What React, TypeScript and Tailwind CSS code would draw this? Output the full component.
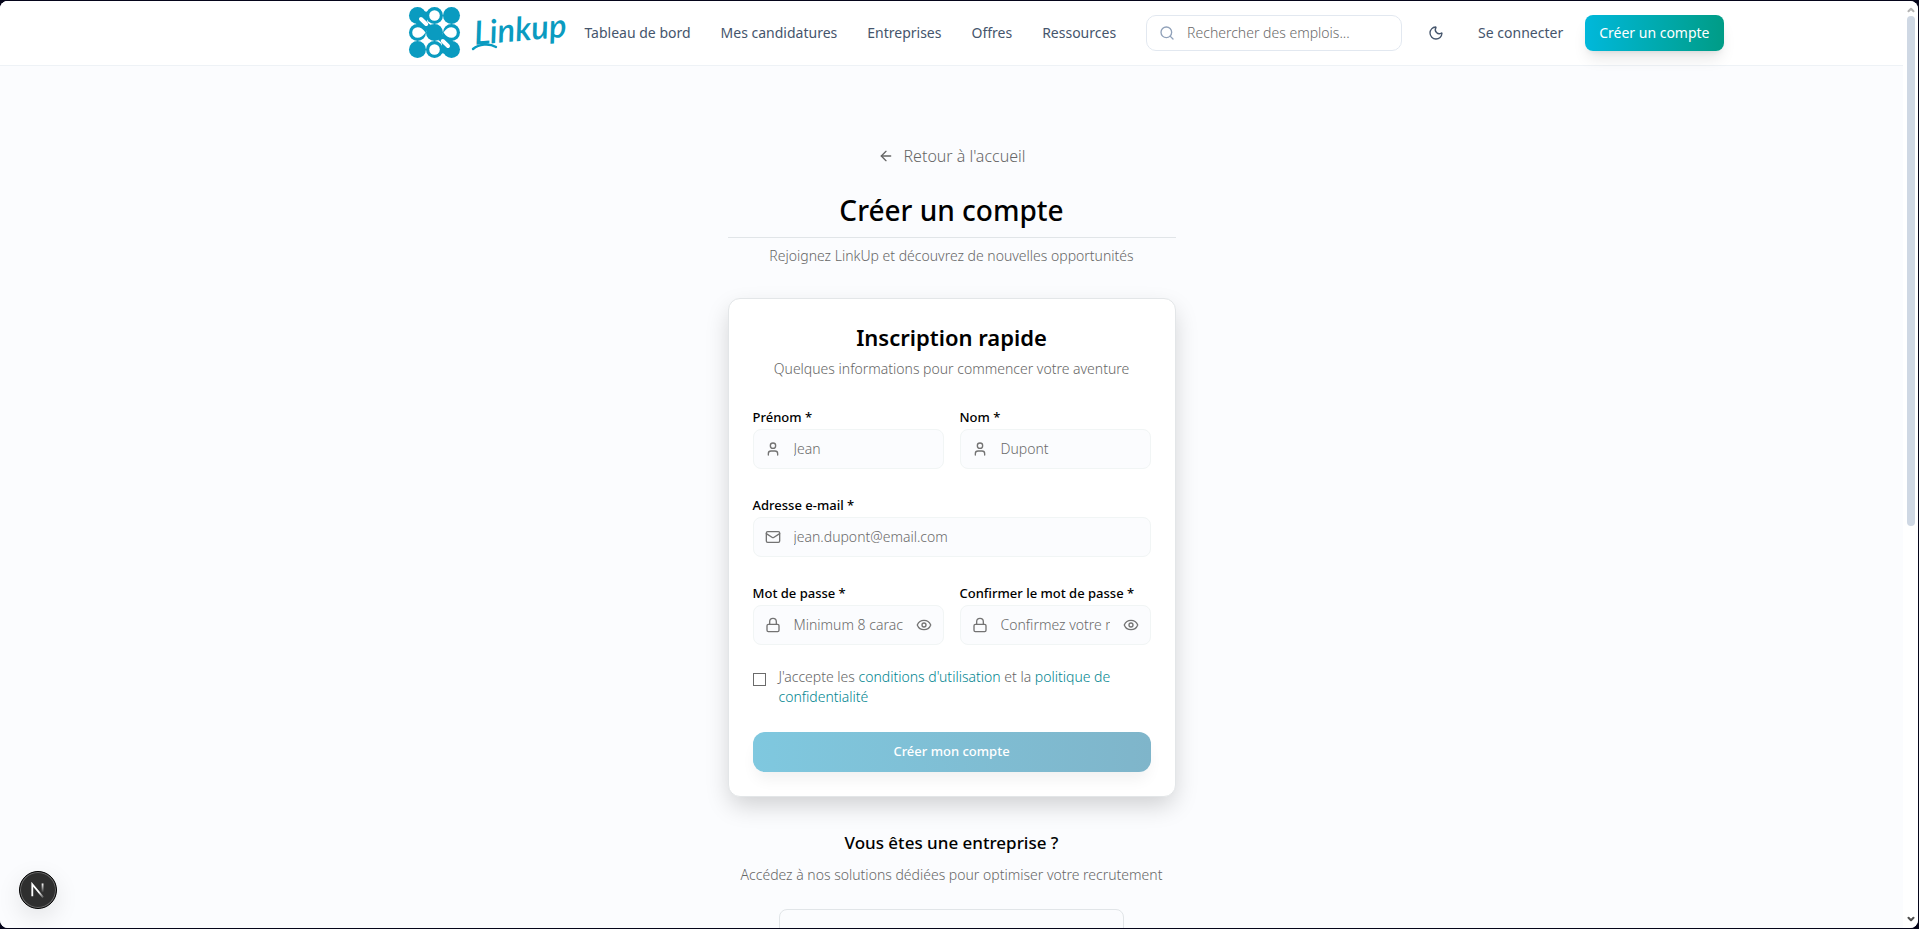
import React from "react";
import {
  ArrowLeft,
  ChevronDown,
  ChevronUp,
  Eye,
  Lock,
  Mail,
  Moon,
  Search,
  User,
  type LucideIcon,
} from "lucide-react";

const navLinks = ["Tableau de bord", "Mes candidatures", "Entreprises", "Offres", "Ressources"];

function Logo() {
  return (
    <a href="#" aria-label="Linkup" className="flex shrink-0 items-center">
      <svg viewBox="0 0 160 54" className="h-[54px] w-40 overflow-visible" fill="none">
        <g fill="#0a9bc0">
          <circle cx="8.5" cy="9.5" r="8.5" />
          <circle cx="42.5" cy="9.5" r="8.5" />
          <circle cx="25.5" cy="26.5" r="8.5" />
          <circle cx="8.5" cy="43.5" r="8.5" />
          <circle cx="42.5" cy="43.5" r="8.5" />
          <path d="M12 3Q17 8 21 4L18 14Q18 17 22 19L16 27L8 20L6 14Z" />
          <path d="M39 50Q34 45 30 49L33 39Q33 36 29 34L35 26L43 33L45 39Z" />
          <circle cx="25.5" cy="9.5" r="8.5" />
          <circle cx="8.5" cy="26.5" r="8.5" />
          <circle cx="42.5" cy="26.5" r="8.5" />
          <circle cx="25.5" cy="43.5" r="8.5" />
        </g>
        <g fill="#fff">
          <circle cx="25.5" cy="9.5" r="5.3" />
          <circle cx="25.5" cy="43.5" r="5.3" />
          <path d="M16.5 26.5Q13 31.8 8.5 31.8A5.3 5.3 0 0 1 8.5 21.2Q13 21.2 16.5 26.5Z" />
          <path d="M34.5 26.5Q38 21.2 42.5 21.2A5.3 5.3 0 0 1 42.5 31.8Q38 31.8 34.5 26.5Z" />
        </g>
        <g stroke="#fff" strokeWidth="4" strokeLinecap="round">
          <path d="M12 13L17.2 18" />
          <path d="M39 40L33.8 35" />
        </g>
        <g transform="rotate(-5 64 40)">
          <text
            x="66"
            y="39"
            fill="#0a9bc0"
            fontSize="33"
            className="font-['Lato','Liberation_Sans',sans-serif] font-semibold italic"
          >
            Linkup
          </text>
        </g>
        <path d="M64 43C70 38 80 37 87 41" stroke="#0a9bc0" strokeWidth="2.4" strokeLinecap="round" />
      </svg>
    </a>
  );
}

function Header() {
  return (
    <header className="flex h-[65px] items-center justify-center border-b border-[#eef2f6] bg-white pl-[230px]">
      <Logo />
      <nav className="ml-[15px] flex gap-[30px] text-sm text-[#45556c]">
        {navLinks.map((label) => (
          <a key={label} href="#" className="whitespace-nowrap">
            {label}
          </a>
        ))}
      </nav>
      <div className="ml-[30px] flex h-9 w-64 items-center gap-3 rounded-[10px] border border-[#e2e8f0] bg-white px-3">
        <Search className="size-4 shrink-0 text-[#90a1b9]" />
        <input
          type="search"
          aria-label="Recherche"
          placeholder="Rechercher des emplois..."
          className="w-full min-w-0 bg-transparent text-sm font-light outline-none placeholder:text-[#6a6a6a]"
        />
      </div>
      <button type="button" aria-label="Mode sombre" className="ml-4 flex size-9 items-center justify-center text-[#45556c]">
        <Moon className="size-4" />
      </button>
      <a href="#" className="ml-6 text-sm whitespace-nowrap text-[#45556c]">
        Se connecter
      </a>
      <a
        href="#"
        className="ml-[22px] flex h-9 items-center rounded-lg bg-linear-to-r from-[#00b8db] to-[#009c86] px-3.5 text-sm whitespace-nowrap text-white shadow-lg"
      >
        Créer un compte
      </a>
    </header>
  );
}

type FieldProps = {
  id: string;
  label: string;
  type: string;
  placeholder: string;
  icon: LucideIcon;
};

function Field({ id, label, type, placeholder, icon: Icon }: FieldProps) {
  return (
    <div className="flex min-w-0 flex-col gap-0.5">
      <label htmlFor={id} className="text-[13px] leading-5 font-medium whitespace-nowrap text-black">
        {label} *
      </label>
      <div className="flex h-10 items-center gap-[13px] rounded-lg border border-[#f1f5f5] bg-[#fbfcfe] px-[11px] text-[#737373]">
        <Icon className="size-4 shrink-0" />
        <input
          id={id}
          type={type}
          placeholder={placeholder}
          className="w-full min-w-0 bg-transparent text-sm font-light outline-none placeholder:text-[#6a6a6a]"
        />
        {type === "password" && (
          <button type="button" aria-label="Afficher le mot de passe" className="shrink-0">
            <Eye className="size-4" />
          </button>
        )}
      </div>
    </div>
  );
}

function SignupCard() {
  return (
    <section className="mt-8 rounded-xl border border-[#e3e6e8] bg-white p-6 shadow-[0_10px_25px_-2px_rgba(0,0,0,0.18)]">
      <h2 className="text-center text-[22px] leading-7 font-semibold text-black">Inscription rapide</h2>
      <p className="mt-2 text-center text-sm font-light text-[#666666]">
        Quelques informations pour commencer votre aventure
      </p>
      <form className="mt-7">
        <div className="flex flex-col gap-[26px]">
          <div className="grid grid-cols-2 gap-4">
            <Field id="prenom" label="Prénom" type="text" placeholder="Jean" icon={User} />
            <Field id="nom" label="Nom" type="text" placeholder="Dupont" icon={User} />
          </div>
          <Field id="email" label="Adresse e-mail" type="email" placeholder="jean.dupont@email.com" icon={Mail} />
          <div className="grid grid-cols-2 gap-4">
            <Field id="mdp" label="Mot de passe" type="password" placeholder="Minimum 8 caractères" icon={Lock} />
            <Field
              id="confirmation"
              label="Confirmer le mot de passe"
              type="password"
              placeholder="Confirmez votre mot de passe"
              icon={Lock}
            />
          </div>
        </div>
        <div className="mt-[22px] flex items-start gap-[13px]">
          <input
            id="conditions"
            type="checkbox"
            className="mt-1.5 size-[13px] shrink-0 appearance-none border border-[#6b6b6b] bg-white checked:bg-[#0a9bc0]"
          />
          <label htmlFor="conditions" className="text-sm font-light text-[#666666]">
            J'accepte les{" "}
            <a href="#" className="text-[#008590]">
              conditions d'utilisation
            </a>{" "}
            et la{" "}
            <a href="#" className="text-[#008590]">
              politique de confidentialité
            </a>
          </label>
        </div>
        <button
          type="submit"
          className="mt-[25px] h-10 w-full rounded-xl bg-linear-to-r from-[#7fc8df] to-[#7fb5ca] text-[13px] font-medium text-white shadow-[0_10px_15px_-3px_rgba(0,0,0,0.06)]"
        >
          Créer mon compte
        </button>
      </form>
    </section>
  );
}

export default function App() {
  return (
    <div className="h-screen overflow-hidden bg-[#05051a] py-px pr-px font-['Noto_Sans','Liberation_Sans',sans-serif]">
      <div className="relative flex h-full overflow-hidden rounded-lg bg-white">
        <div className="min-w-0 flex-1 bg-[#fbfcfe]">
          <Header />
          <main className="mx-auto max-w-md pt-[78px]">
            <a href="#" className="flex items-center justify-center gap-2.5 text-base font-light text-[#666666]">
              <ArrowLeft className="size-4" />
              Retour à l'accueil
            </a>
            <h1 className="mt-6 border-b border-[#e1e5e8] pb-[9px] text-center text-[28px] leading-9 font-medium text-black">
              Créer un compte
            </h1>
            <p className="mt-2 text-center text-sm font-light text-[#666666]">
              Rejoignez LinkUp et découvrez de nouvelles opportunités
            </p>
            <SignupCard />
            <section className="mt-8 text-center">
              <h3 className="text-[17px] leading-7 font-medium text-black">Vous êtes une entreprise ?</h3>
              <p className="mt-2 text-sm font-light whitespace-nowrap text-[#666666]">
                Accédez à nos solutions dédiées pour optimiser votre recrutement
              </p>
              <div className="mx-auto mt-6 h-16 w-[345px] rounded-lg border border-[#e1e5e8]" />
            </section>
          </main>
        </div>
        <div className="flex w-[15px] shrink-0 flex-col items-center bg-white py-1" aria-hidden="true">
          <ChevronUp className="size-2.5 text-[#b5b5b5]" strokeWidth={5} />
          <div className="mt-px h-[510px] w-2 rounded-full bg-[#cfd8e4]" />
          <ChevronDown className="mt-auto size-2.5 text-[#505050]" strokeWidth={5} />
        </div>
        <button
          type="button"
          aria-label="Outils de développement"
          className="absolute bottom-[19px] left-[19px] flex size-[38px] items-center justify-center rounded-full border border-black bg-[#2f2f2f] shadow-[inset_0_0_0_1px_#6a6a6a,0_8px_24px_rgba(0,0,0,0.1)]"
        >
          <svg viewBox="0 0 14 14" className="size-4" fill="none">
            <defs>
              <linearGradient id="fade" x1="0" y1="0" x2="0" y2="1">
                <stop offset="0" stopColor="#fff" />
                <stop offset="1" stopColor="#fff" stopOpacity="0" />
              </linearGradient>
              <linearGradient id="diag" x1="0" y1="0" x2="1" y2="1">
                <stop offset="0.6" stopColor="#fff" />
                <stop offset="1" stopColor="#fff" stopOpacity="0.2" />
              </linearGradient>
            </defs>
            <path d="M2 12.5V2L11.5 13.5" stroke="url(#diag)" strokeWidth="1.6" />
            <rect x="10.2" y="1.3" width="1.6" height="8" fill="url(#fade)" />
          </svg>
        </button>
      </div>
    </div>
  );
}
